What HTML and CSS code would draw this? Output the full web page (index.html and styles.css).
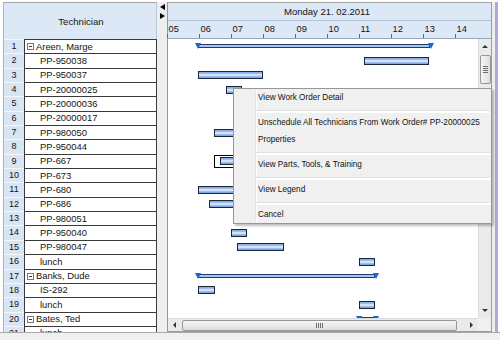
FILE: index.html
```html
<!DOCTYPE html>
<html>
<head>
<meta charset="utf-8">
<title>Technician schedule</title>
<link rel="stylesheet" href="styles.css">
</head>
<body>
<div class="app">
  <div class="main">
    <div class="edge-left"></div>
    <div class="grid">
      <div class="grid-head">Technician</div>
      <div class="grid-rows">
        <div class="row"><div class="num">1</div><div class="name group"><span class="tog"></span>Areen, Marge</div></div>
        <div class="row"><div class="num">2</div><div class="name">PP-950038</div></div>
        <div class="row"><div class="num">3</div><div class="name">PP-950037</div></div>
        <div class="row"><div class="num">4</div><div class="name">PP-20000025</div></div>
        <div class="row"><div class="num">5</div><div class="name">PP-20000036</div></div>
        <div class="row"><div class="num">6</div><div class="name">PP-20000017</div></div>
        <div class="row"><div class="num">7</div><div class="name">PP-980050</div></div>
        <div class="row"><div class="num">8</div><div class="name">PP-950044</div></div>
        <div class="row"><div class="num">9</div><div class="name">PP-667</div></div>
        <div class="row"><div class="num">10</div><div class="name">PP-673</div></div>
        <div class="row"><div class="num">11</div><div class="name">PP-680</div></div>
        <div class="row"><div class="num">12</div><div class="name">PP-686</div></div>
        <div class="row"><div class="num">13</div><div class="name">PP-980051</div></div>
        <div class="row"><div class="num">14</div><div class="name">PP-950040</div></div>
        <div class="row"><div class="num">15</div><div class="name">PP-980047</div></div>
        <div class="row"><div class="num">16</div><div class="name">lunch</div></div>
        <div class="row"><div class="num">17</div><div class="name group"><span class="tog"></span>Banks, Dude</div></div>
        <div class="row"><div class="num">18</div><div class="name">IS-292</div></div>
        <div class="row"><div class="num">19</div><div class="name">lunch</div></div>
        <div class="row"><div class="num">20</div><div class="name group"><span class="tog"></span>Bates, Ted</div></div>
        <div class="row"><div class="num">21</div><div class="name">lunch</div></div>
      </div>
    </div>
    <div class="splitter"><span class="arr-l"></span><span class="arr-r"></span></div>
    <div class="gantt">
      <div class="g-head">
        <div class="g-date">Monday 21. 02.2011</div>
        <div class="g-hours">
          <div class="hr">05</div><div class="hr">06</div><div class="hr">07</div><div class="hr">08</div><div class="hr">09</div>
          <div class="hr">10</div><div class="hr">11</div><div class="hr">12</div><div class="hr">13</div><div class="hr">14</div>
        </div>
      </div>
      <div class="g-mid">
        <div class="g-canvas">
          <div class="g-row"><div class="sum" style="left:30px;width:232px"></div></div>
          <div class="g-row"><div class="bar" style="left:196px;width:65px"></div></div>
          <div class="g-row"><div class="bar" style="left:30px;width:65px"></div></div>
          <div class="g-row"><div class="bar" style="left:58px;width:16px"></div></div>
          <div class="g-row"></div>
          <div class="g-row"></div>
          <div class="g-row"><div class="bar" style="left:46px;width:40px"></div></div>
          <div class="g-row"></div>
          <div class="g-row"><div class="sel" style="left:46px;width:48px"></div><div class="bar" style="left:52px;width:36px"></div></div>
          <div class="g-row"></div>
          <div class="g-row"><div class="bar" style="left:30px;width:50px"></div></div>
          <div class="g-row"><div class="bar" style="left:41px;width:40px"></div></div>
          <div class="g-row"></div>
          <div class="g-row"><div class="bar" style="left:63px;width:16px"></div></div>
          <div class="g-row"><div class="bar" style="left:69px;width:47px"></div></div>
          <div class="g-row"><div class="bar" style="left:191px;width:16px"></div></div>
          <div class="g-row"><div class="sum" style="left:30px;width:177px"></div></div>
          <div class="g-row"><div class="bar" style="left:30px;width:17px"></div></div>
          <div class="g-row"><div class="bar" style="left:191px;width:16px"></div></div>
          <div class="g-row"><div class="sum" style="left:191px;width:16px"></div></div>
        </div>
        <div class="vscroll">
          <div class="vs-btn"><span class="ar-up"></span></div>
          <div class="vs-thumb"><span class="grip-h"></span></div>
          <div class="vs-space"></div>
          <div class="vs-btn"><span class="ar-down"></span></div>
        </div>
      </div>
      <div class="g-foot">
        <div class="hscroll">
          <div class="hs-btn"><span class="ar-left"></span></div>
          <div class="hs-thumb"><span class="grip-v"></span></div>
          <div class="hs-space"></div>
          <div class="hs-btn"><span class="ar-right"></span></div>
        </div>
        <div class="corner"></div>
      </div>
    </div>
    <div class="edge-right"></div>
  </div>
  <div class="footer"></div>

  <div class="menu">
    <div class="mi">View Work Order Detail</div>
    <div class="msep"></div>
    <div class="mi">Unschedule All Technicians From Work Order# PP-20000025</div>
    <div class="mi">Properties</div>
    <div class="msep"></div>
    <div class="mi">View Parts, Tools, &amp; Training</div>
    <div class="msep"></div>
    <div class="mi">View Legend</div>
    <div class="msep"></div>
    <div class="mi">Cancel</div>
  </div>
</div>
</body>
</html>
```

FILE: styles.css
```css
* { box-sizing: border-box; }
html, body { margin: 0; padding: 0; }
body {
  width: 500px;
  height: 340px;
  overflow: hidden;
  background: #fff;
  font-family: "Liberation Sans", Arial, sans-serif;
  color: #141414;
}
.app { position: relative; width: 500px; height: 340px; }
.main { display: flex; height: 332px; padding-top: 2px; }
.edge-left { width: 3px; flex: none; }

/* left grid */
.grid {
  width: 154px;
  flex: none;
  display: flex;
  flex-direction: column;
  overflow: hidden;
  border-left: 1px solid #b4b4b4;
}
.grid-head {
  height: 37px;
  flex: none;
  border-top: 1px solid #a3a3a3;
  border-right: 1px solid #b8c8da;
  background: #dce8f5;
  display: flex;
  align-items: center;
  justify-content: center;
  font-size: 9.6px;
  padding-left: 2px;
}
.grid-rows { flex: 1; overflow: hidden; }
.row { display: flex; height: 14.35px; }
.num {
  width: 20px;
  flex: none;
  background: #d9e5f2;
  border-top: 1px solid #f3f7fb;
  text-align: center;
  font-size: 9px;
  line-height: 13px;
}
.name {
  flex: 1;
  background: #fff;
  border-top: 1px solid #3a3a3a;
  border-left: 1px solid #3a3a3a;
  border-right: 1px solid #3a3a3a;
  padding-left: 15px;
  font-size: 9.4px;
  line-height: 12px;
  display: flex;
  align-items: flex-start;
  padding-top: 0.5px;
  white-space: nowrap;
}
.name.group { padding-left: 2px; }
.tog {
  width: 7px;
  height: 7px;
  border: 1px solid #7a7a7a;
  margin-right: 2px;
  margin-top: 2.5px;
  position: relative;
  flex: none;
}
.tog::after {
  content: "";
  position: absolute;
  left: 1px;
  right: 1px;
  top: 2px;
  height: 1px;
  background: #333;
}

/* splitter */
.splitter {
  width: 10px;
  flex: none;
  background: #eeeeee;
  display: flex;
  flex-direction: column;
  align-items: center;
  padding-top: 2px;
  gap: 3px;
}
.arr-l {
  width: 0; height: 0;
  border-top: 3.5px solid transparent;
  border-bottom: 3.5px solid transparent;
  border-right: 5px solid #000;
}
.arr-r {
  width: 0; height: 0;
  border-top: 3.5px solid transparent;
  border-bottom: 3.5px solid transparent;
  border-left: 5px solid #000;
}

/* gantt */
.gantt {
  width: 325px;
  flex: none;
  display: flex;
  flex-direction: column;
  border-left: 1px solid #8d99a6;
  border-right: 1px solid #9b9b9b;
  border-bottom: 1px solid #9b9b9b;
}
.g-head {
  flex: none;
  background: #dce8f5;
  border-top: 1px solid #a3a3a3;
}
.g-date {
  height: 18px;
  border-bottom: 1px solid #b0c2d6;
  text-align: center;
  line-height: 17px;
  font-size: 9.5px;
  padding-right: 5px;
}
.g-hours {
  height: 18px;
  display: flex;
  margin-left: -1px;
  border-bottom: 1px solid #97a9bd;
}
.hr {
  width: 32px;
  flex: none;
  position: relative;
  padding-left: 1.5px;
  font-size: 9.3px;
  line-height: 16px;
}
.hr::before {
  content: "";
  position: absolute;
  left: 0;
  bottom: 0;
  width: 1px;
  height: 4px;
  background: #6a6a6a;
}
.g-mid { display: flex; height: 279px; flex: none; }
.g-canvas {
  flex: 1;
  background: #fff;
  overflow: hidden;
}
.g-row { position: relative; height: 14.35px; }
.bar {
  position: absolute;
  top: 3.5px;
  height: 8px;
  border: 1px solid #1b2740;
  background: linear-gradient(#7fa3de 0, #9fbdec 25%, #eef4fd 50%, #9fbdec 75%, #7399d8 100%);
}
.sum {
  position: absolute;
  top: 5px;
  height: 4px;
  border: 1px solid #1f3d74;
  background: #a9c4ee;
}
.sum::before, .sum::after {
  content: "";
  position: absolute;
  top: -2px;
  width: 0; height: 0;
  border-left: 3.5px solid transparent;
  border-right: 3.5px solid transparent;
  border-top: 6px solid #1666d4;
}
.sum::before { left: -4.5px; }
.sum::after { right: -4.5px; }
.sel {
  position: absolute;
  top: 1px;
  height: 13px;
  border: 1px solid #000;
}

/* scrollbars */
.vscroll {
  width: 13px;
  flex: none;
  background: #eaeaea;
  border-left: 1px solid #dcdcdc;
  display: flex;
  flex-direction: column;
  align-items: center;
}
.vs-btn { height: 15px; width: 100%; display: flex; align-items: center; justify-content: center; flex: none; }
.vs-thumb {
  width: 11px;
  height: 29px;
  flex: none;
  margin-top: 1px;
  border: 1px solid #979797;
  border-radius: 2px;
  background: linear-gradient(to right, #f5f5f5, #dedede);
  display: flex;
  align-items: center;
  justify-content: center;
}
.grip-h {
  width: 5px;
  height: 7px;
  background: repeating-linear-gradient(#6f6f6f 0 1px, transparent 1px 2px);
}
.vs-space { flex: 1; }
.ar-up { width: 0; height: 0; border-left: 3px solid transparent; border-right: 3px solid transparent; border-bottom: 3px solid #333; }
.ar-down { width: 0; height: 0; border-left: 3px solid transparent; border-right: 3px solid transparent; border-top: 3px solid #333; }
.g-foot { display: flex; height: 13px; flex: none; }
.hscroll {
  flex: 1;
  display: flex;
  align-items: center;
  background: #eaeaea;
  border-top: 1px solid #dcdcdc;
}
.hs-btn { width: 13px; height: 100%; display: flex; align-items: center; justify-content: center; flex: none; }
.hs-thumb {
  width: 275px;
  height: 11px;
  flex: none;
  margin-left: 1px;
  border: 1px solid #979797;
  border-radius: 2px;
  background: linear-gradient(#f5f5f5, #dedede);
  display: flex;
  align-items: center;
  justify-content: center;
}
.grip-v {
  width: 7px;
  height: 5px;
  background: repeating-linear-gradient(to right, #6f6f6f 0 1px, transparent 1px 2px);
}
.hs-space { flex: 1; }
.ar-left { width: 0; height: 0; border-top: 3px solid transparent; border-bottom: 3px solid transparent; border-right: 3px solid #333; }
.ar-right { width: 0; height: 0; border-top: 3px solid transparent; border-bottom: 3px solid transparent; border-left: 3px solid #333; }
.corner { width: 13px; flex: none; background: #f0f0f0; }

.edge-right {
  width: 8px;
  flex: none;
  background: linear-gradient(to right, #eeeeee 0 3px, #b3a6da 3px 6px, #ffffff 6px);
}
.footer {
  height: 8px;
  border-top: 1px solid #a8a8a8;
  background: #f0f0f0;
}

/* context menu */
.menu {
  position: absolute;
  left: 233px;
  top: 88px;
  width: 259px;
  background: #f0f0f0;
  border: 1px solid #979797;
  box-shadow: 2px 2px 2px rgba(0, 0, 0, 0.25);
  font-size: 8.2px;
  color: #111;
}
.menu::before {
  content: "";
  position: absolute;
  left: 21px;
  top: 1px;
  bottom: 1px;
  width: 1px;
  background: #e2e3e3;
  box-shadow: 1px 0 0 #fff;
}
.mi {
  height: 17px;
  line-height: 17px;
  padding-left: 24px;
  white-space: nowrap;
}
.msep {
  height: 8px;
  margin-left: 22px;
  margin-right: 1px;
  position: relative;
}
.msep::after {
  content: "";
  position: absolute;
  left: 0;
  right: 0;
  top: 4px;
  height: 2px;
  border-top: 1px solid #e0e0e0;
  background: #fff;
}
```
